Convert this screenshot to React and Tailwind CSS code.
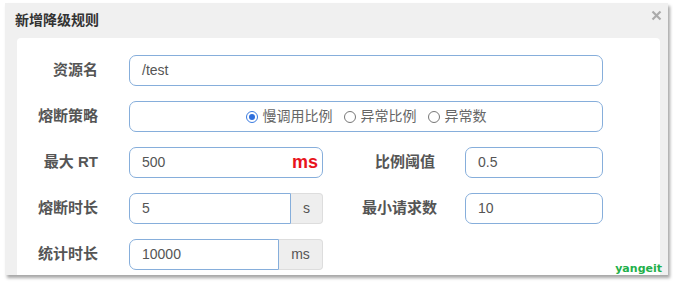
const font = { fontFamily: '"Liberation Sans", "Noto Sans CJK SC", sans-serif' };

function Label({ children, className = "" }) {
  return (
    <div className={`shrink-0 text-right text-[15px] font-bold text-[#555] ${className}`}>{children}</div>
  );
}

function Radio({ checked, children }) {
  return (
    <label className="flex items-center gap-[5px]">
      <span
        className={`flex h-[12px] w-[12px] items-center justify-center rounded-full border ${
          checked ? "border-[#3a7be0]" : "border-[#777]"
        } bg-white`}
      >
        {checked && <span className="h-[6px] w-[6px] rounded-full bg-[#2f6fdc]" />}
      </span>
      <span className="text-[14px] text-[#666]">{children}</span>
    </label>
  );
}

function Addon({ children, className = "" }) {
  return (
    <div
      className={`flex h-[31px] items-center justify-center rounded-r-[4px] border border-l-0 border-[#ddd] bg-[#eee] text-[14px] text-[#555] ${className}`}
    >
      {children}
    </div>
  );
}

export default function App() {
  const box = "h-[31px] border border-[#86aedb] bg-white pl-[12px] text-[14px] text-[#555] flex items-center";
  return (
    <div className="h-[284px] w-[673px] bg-white pl-[5px] pt-[3px]" style={font}>
      <div className="relative h-[272px] w-[663px] overflow-hidden bg-[#f0f0f0] shadow-[2px_3px_3px_rgba(0,0,0,0.35)]">
        <div className="flex h-[35px] items-center pl-[10px] text-[14px] font-bold text-[#333]">新增降级规则</div>
        <svg className="absolute right-[6px] top-[7px]" width="11" height="11" viewBox="0 0 11 11">
          <path d="M1.5 1.5 L9.5 9.5 M9.5 1.5 L1.5 9.5" stroke="#aaa" strokeWidth="2.2" />
        </svg>
        <div className="ml-[12px] flex h-[240px] w-[643px] flex-col gap-[15px] rounded-t-[4px] bg-white pt-[17px]">
          <div className="flex items-center">
            <Label className="w-[81px]">资源名</Label>
            <div className={`${box} ml-[31px] w-[474px] rounded-[7px]`}>/test</div>
          </div>
          <div className="flex items-center">
            <Label className="w-[81px]">熔断策略</Label>
            <div className={`${box} ml-[31px] w-[474px] justify-center gap-[11px] rounded-[7px] pl-0 pr-[12px]`}>
              <Radio checked>慢调用比例</Radio>
              <Radio>异常比例</Radio>
              <Radio>异常数</Radio>
            </div>
          </div>
          <div className="flex items-center">
            <Label className="w-[81px]">最大 RT</Label>
            <div className={`${box} relative ml-[31px] w-[194px] rounded-[7px]`}>
              500
              <span className="absolute right-[4px] top-[4px] text-[18px] font-bold leading-[20px] text-[#e8141c]">
                ms
              </span>
            </div>
            <Label className="w-[112px]">比例阈值</Label>
            <div className={`${box} ml-[30px] w-[138px] rounded-[7px]`}>0.5</div>
          </div>
          <div className="flex items-center">
            <Label className="w-[81px]">熔断时长</Label>
            <div className="ml-[31px] flex">
              <div className={`${box} w-[162px] rounded-l-[7px]`}>5</div>
              <Addon className="w-[32px]">s</Addon>
            </div>
            <Label className="w-[114px]">最小请求数</Label>
            <div className={`${box} ml-[28px] w-[138px] rounded-[7px]`}>10</div>
          </div>
          <div className="flex items-center">
            <Label className="w-[81px]">统计时长</Label>
            <div className="ml-[31px] flex">
              <div className={`${box} w-[150px] rounded-l-[7px]`}>10000</div>
              <Addon className="w-[44px]">ms</Addon>
            </div>
          </div>
        </div>
        <span
          className="absolute bottom-[1px] right-[6px] text-[11px] font-bold leading-none text-[#22b04a]"
          style={{ fontFamily: '"DejaVu Sans", sans-serif' }}
        >
          yangeit
        </span>
      </div>
    </div>
  );
}
